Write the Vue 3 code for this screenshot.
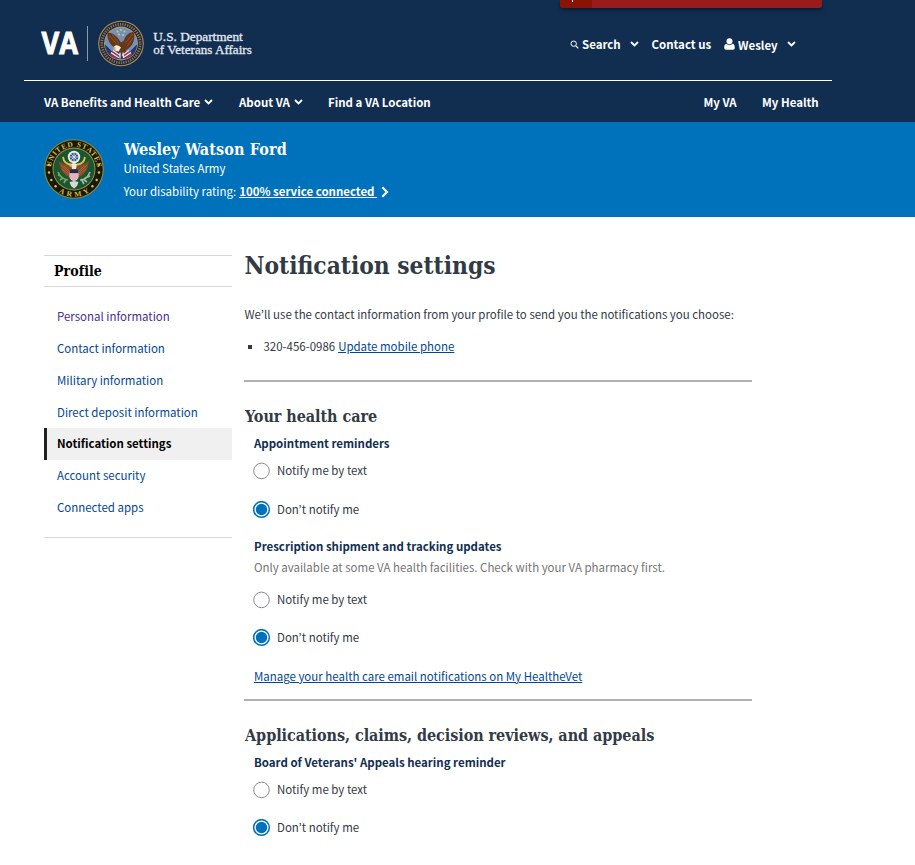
<script setup>
const sideItems = [
  { label: 'Personal information', visited: true },
  { label: 'Contact information' },
  { label: 'Military information' },
  { label: 'Direct deposit information' },
  { label: 'Notification settings', active: true },
  { label: 'Account security' },
  { label: 'Connected apps' },
]
const options = ['Notify me by text', 'Don’t notify me']
const sections = [
  {
    title: 'Your health care',
    cls: 'care',
    groups: [
      { title: 'Appointment reminders', cls: 'g1' },
      {
        title: 'Prescription shipment and tracking updates',
        cls: 'g2',
        hint: 'Only available at some VA health facilities. Check with your VA pharmacy first.',
      },
    ],
    link: 'Manage your health care email notifications on My HealtheVet',
  },
  {
    title: 'Applications, claims, decision reviews, and appeals',
    cls: 'apps',
    groups: [{ title: "Board of Veterans' Appeals hearing reminder", cls: 'g3' }],
  },
]
const ringStars = [-133, -116, -98, -80, 80, 98, 116, 133].map((d) => {
  const a = (d * Math.PI) / 180
  return { x: 30 + 25.2 * Math.sin(a), y: 30 - 25.2 * Math.cos(a) }
})
</script>

<template>
  <div class="page">
    <header class="header">
      <div class="crisis"><span class="crisis-tab"><i></i></span></div>
      <div class="top">
        <div class="brand">
          <svg class="logo" width="220" height="50" viewBox="0 0 220 50">
            <text class="va" x="1.500" y="34.200" textLength="36.500" lengthAdjust="spacingAndGlyphs">VA</text>
            <rect x="47" y="6" width="1" height="35" fill="#8a9bb0" />
            <g transform="translate(81 23.5)">
              <circle r="22.800" fill="#b3914b" />
              <circle r="21.700" fill="#1c2341" />
              <circle r="19.200" fill="none" stroke="#b39a58" stroke-width="2.800" stroke-dasharray="1.300 1.100" opacity=".7" />
              <circle r="16.900" fill="#c3a25a" />
              <circle r="16.100" fill="#6f93bd" />
              <path d="M-16 1L-8 8H8L16 1Q16 9 9 13.500Q0 18-9 13.500Q-16 9-16 1Z" fill="#26386b" />
              <path d="M-13 3L-4 13M13 3L4 13" stroke="#7d8fc0" stroke-width="1" />
              <path d="M-10 9L-2 14M-8 7L-1 12M10 9L2 14M8 7L1 12" stroke="#ece4e6" stroke-width="1.500" />
              <path d="M-11 11L-4 15M-9 8L-2 13M11 11L4 15M9 8L2 13" stroke="#c02f3e" stroke-width="1.200" />
              <path d="M-2 5C-6 5-10 2-12-2C-13.500-5-14-9-13.500-11C-9-11-4-8-1.500-3L0-1L3-3C4-8 8-11 12.500-11.500C14-9 13.500-5 12.500-2C11 2 9 4 6 6L3 10L-2 9Z" fill="#683619" />
              <path d="M-12-8L-4 1M-9-9L-2 0M11-9L4 0M12-6L6 3" stroke="#8d5327" stroke-width="1" fill="none" />
              <path d="M-7 3Q-4 0 0 4L-2.500 8L-5.500 7Z" fill="#f3eee6" />
              <path d="M-8.500 4L-5 4L-6.500 7Z" fill="#e2aa35" />
              <path d="M-1 9L-1 15M2 9L2.500 14" stroke="#f3e9d8" stroke-width="1.200" />
              <g fill="#e5c45b"><circle cy="-13.500" r="1" /><circle cx="-3.500" cy="-12" r="1" /><circle cx="3.500" cy="-12" r="1" /><circle cx="-2" cy="-9" r="1" /><circle cx="2" cy="-8.500" r="1" /></g>
            </g>
            <text class="dept" x="113.300" y="21.300" textLength="89.500" lengthAdjust="spacingAndGlyphs">U.S. Department</text>
            <text class="dept" x="113.300" y="34.300" textLength="98.500" lengthAdjust="spacingAndGlyphs">of Veterans Affairs</text>
          </svg>
        </div>
        <div class="tools">
          <svg class="mag" width="9" height="9" viewBox="0 0 9 9"><circle cx="3.700" cy="3.700" r="2.700" fill="none" stroke="#fff" stroke-width="1" /><path d="M5.800 5.800L8.300 8.300" stroke="#fff" stroke-width="1.200" /></svg>
          <span class="t-search">Search</span>
          <svg class="chev c1" width="9" height="6" viewBox="0 0 9 6"><path d="M1 1L4.500 4.500L8 1" /></svg>
          <span class="t-contact">Contact us</span>
          <svg class="user" width="11" height="12" viewBox="0 0 11 12"><circle cx="5.500" cy="3.200" r="3" fill="#fff" /><path d="M2.500 5.800C.700 6 .200 7.800.200 10Q.200 11.800 2 11.800H9Q10.800 11.800 10.800 10C10.800 7.800 10.300 6 8.500 5.800Q5.500 8.200 2.500 5.800Z" fill="#fff" /></svg>
          <span class="t-wesley">Wesley</span>
          <svg class="chev c2" width="9" height="6" viewBox="0 0 9 6"><path d="M1 1L4.500 4.500L8 1" /></svg>
        </div>
      </div>
      <nav class="nav">
        <span class="n1">VA Benefits and Health Care</span>
        <svg class="chev c3" width="9" height="6" viewBox="0 0 9 6"><path d="M1 1L4.500 4.500L8 1" /></svg>
        <span class="n2">About VA</span>
        <svg class="chev c4" width="9" height="6" viewBox="0 0 9 6"><path d="M1 1L4.500 4.500L8 1" /></svg>
        <span class="n3">Find a VA Location</span>
        <span class="n4">My VA</span>
        <span class="n5">My Health</span>
      </nav>
    </header>

    <section class="banner">
      <svg class="seal" width="60" height="60" viewBox="0 0 60 60">
        <defs>
          <path id="arcTop" d="M10.500 43.700A23 23 0 1 1 49.500 43.700" transform="translate(0 -.800)" />
          <path id="arcBottom" d="M2.200 30A27.800 27.800 0 0 0 57.800 30" />
        </defs>
        <circle cx="30" cy="30" r="29.800" fill="#8f8a34" />
        <circle cx="30" cy="30" r="28.700" fill="#17180f" />
        <circle cx="30" cy="30" r="21.500" fill="#a39a44" />
        <circle cx="30" cy="30" r="20.600" fill="#1b5632" />
        <text class="ring"><textPath href="#arcTop" startOffset="50%" text-anchor="middle" textLength="67">UNITED STATES</textPath></text>
        <text class="ring"><textPath href="#arcBottom" startOffset="50%" text-anchor="middle" textLength="33">ARMY</textPath></text>
        <circle v-for="(s, i) in ringStars" :key="i" :cx="s.x" :cy="s.y" r="1.200" fill="#e3c53c" />
        <path d="M28 25C24 27 19 25 15 22C15.500 28 18 35 25 38L30 39L35 38C42 35 44.500 28 45 22C41 25 36 27 32 25Z" fill="#8a4a28" />
        <path d="M17 26L25 34M20 27L26 33M43 26L35 34M40 27L34 33M18 30L25 36M42 30L35 36" stroke="#ad6d3e" stroke-width=".8" />
        <path d="M14 33Q17 40 24 41M17 37L14 36M19 39L16 41M22 40L20 44" stroke="#7fa45e" stroke-width="1.700" fill="none" />
        <path d="M46 33Q43 41 36 41M41 39L46 37M39 40L43 43M37 40L40 45" stroke="#a9b59f" stroke-width="1.600" fill="none" />
        <path d="M19 18Q20 25 27 25.500M41 18Q40 25 33 25.500" stroke="#dcc24c" stroke-width="1.800" fill="none" />
        <circle cx="30" cy="18" r="6.200" fill="#efeee2" />
        <circle cx="30" cy="18" r="4.300" fill="#2e5590" />
        <path d="M30 14V22M26 18H34M27.300 15.300L32.700 20.700M32.700 15.300L27.300 20.700" stroke="#dce4ee" stroke-width=".9" />
        <path d="M27 25Q30 23 33 25L32 30H28Z" fill="#f1ead5" />
        <path d="M27 25.500L24.500 27L27.500 28Z" fill="#e2ba36" />
        <path d="M25.500 31H34.500V38Q34 41 30 42Q26 41 25.500 38Z" fill="#f4e4e6" />
        <path d="M27 34V40M29 34V41.500M31 34V41.500M33 34V40" stroke="#dd7f8c" stroke-width="1" />
        <rect x="25.500" y="30.500" width="9" height="3.600" fill="#1e2b52" />
        <path d="M25.500 43L30 42L34.500 43L33 47L30 49.500L27 47Z" fill="#d4d8d6" />
      </svg>
      <div class="who">
        <div class="name">Wesley Watson Ford</div>
        <div class="branch">United States Army</div>
        <div class="rating"><span class="r1">Your disability rating:</span><a class="r2">100% service connected&nbsp;</a>
          <svg width="8" height="12" viewBox="0 0 8 12"><path d="M1.300 1.300L6 6L1.300 10.700" fill="none" stroke="#fff" stroke-width="2.200" /></svg>
        </div>
      </div>
    </section>

    <div class="body">
      <aside class="side">
        <div class="side-title">Profile</div>
        <ul class="side-list">
          <li v-for="it in sideItems" :key="it.label" :class="{ active: it.active, visited: it.visited }"><span>{{ it.label }}</span></li>
        </ul>
      </aside>

      <main class="main">
        <h1>Notification settings</h1>
        <p class="intro">We’ll use the contact information from your profile to send you the notifications you choose:</p>
        <div class="phone"><i class="bullet"></i><span>320-456-0986</span><a>Update mobile phone</a></div>
        <template v-for="s in sections" :key="s.title">
          <hr />
          <h2 :class="s.cls">{{ s.title }}</h2>
          <div v-for="g in s.groups" :key="g.title" class="group" :class="g.cls">
            <div class="g-title">{{ g.title }}</div>
            <div v-if="g.hint" class="hint">{{ g.hint }}</div>
            <div v-for="(o, i) in options" :key="o" class="radio" :class="'o' + i">
              <svg width="18" height="18" viewBox="0 0 18 18">
                <circle v-if="i === 0" cx="8.500" cy="8.900" r="7.800" fill="#fff" stroke="#8a8c90" stroke-width="1" />
                <template v-else>
                  <circle cx="8.500" cy="8.500" r="7.850" fill="#fff" stroke="#0071bb" stroke-width="1.500" />
                  <circle cx="8.500" cy="8.500" r="5.700" fill="#0071bb" />
                </template>
              </svg>
              <span>{{ o }}</span>
            </div>
          </div>
          <a v-if="s.link" class="manage">{{ s.link }}</a>
        </template>
      </main>
    </div>
  </div>
</template>

<style>
body { background: #fff; overflow: hidden; }
</style>

<style scoped>
.page { width: 915px; height: 865px; overflow: hidden; background: #fff; font-family: "Noto Sans CJK KR", "Noto Sans", sans-serif; font-size: 11.47px; line-height: 20px; color: #323a45; white-space: nowrap; }
.header { position: relative; height: 122px; background: #112e51; color: #fff; font-weight: 700; }
.crisis { position: absolute; left: 560px; top: 0; width: 262px; height: 8px; background: #981b1e; border-radius: 0 0 3px 3px; box-shadow: 0 2px 4px rgba(0, 0, 0, .45); overflow: hidden; }
.crisis-tab { display: flex; width: 32px; height: 8px; background: #8b1303; padding-left: 12px; box-sizing: border-box; }
.crisis-tab i { width: 1px; height: 2px; background: #fff; }
.top { box-sizing: border-box; width: 808px; height: 81px; margin-left: 24px; border-bottom: 1px solid #fff; padding: 20px 0 0 16px; display: flex; }
.brand { width: 530px; }
.logo { display: block; }
.va { font: 700 31px "Open Sans", sans-serif; fill: #fff; stroke: #fff; stroke-width: .9px; }
.dept { font: 400 13px "Liberation Serif", serif; fill: #e4e9ef; stroke: #e4e9ef; stroke-width: .3px; }
.tools { display: flex; align-items: center; height: 48px; }
.chev { flex: none; fill: none; stroke: #fff; stroke-width: 1.8px; }
.mag { margin-right: 3px; flex: none; }
.t-search { width: 39px; }
.c1 { margin: 0 12.5px 0 9px; }
.t-contact { width: 60px; }
.user { margin: 0 2px 0 12.5px; flex: none; }
.t-wesley { width: 40px; padding: 2px 0 0 1px; }
.c2 { margin-left: 9px; }
.nav { display: flex; align-items: center; height: 41px; padding-left: 44px; }
.n1 { width: 157px; }
.c3 { margin: 0 26px 0 3px; }
.n2 { width: 52px; }
.c4 { margin: 0 25px 0 3px; }
.n3 { width: 375.5px; }
.n4 { width: 58.5px; }
.banner { display: flex; height: 95px; background: #0071bb; color: #fff; box-sizing: border-box; padding: 17px 0 0 44px; }
.seal { flex: none; }
.ring { font: 700 7.500px "Liberation Serif", serif; fill: #d9bd3c; }
.who { margin-left: 19px; }
.name { font: 700 16px/22px "DejaVu Serif", serif; font-stretch: condensed; padding-left: 1px; letter-spacing: .12px; }
.branch { line-height: 18px; margin-top: -2px; padding-left: .5px; }
.rating { display: flex; align-items: center; height: 20px; margin-top: 4px; padding-left: .5px; }
.r1 { margin-right: 3px; }
.r2 { font-weight: 700; text-decoration: underline; }
.rating svg { margin: 1px 0 0 4px; }
.body { display: flex; padding-left: 44px; }
.side { width: 188px; height: 283px; margin-top: 38px; box-sizing: border-box; border-top: 1px solid #d6d7d9; border-bottom: 1px solid #d6d7d9; }
.side-title { height: 30px; border-bottom: 1px solid #d6d7d9; padding-left: 10px; color: #000; font: 700 14px/30px "DejaVu Serif", serif; font-stretch: condensed; letter-spacing: .05px; }
.side-list { list-style: none; margin: 14px 0 0; padding: 0; }
.side-list li { height: 31.850px; line-height: 31.850px; padding-left: 13px; color: #004795; }
.side-list .visited { color: #4c2c92; }
.side-list .active { background: #f0f0f0; border-left: 3px solid #212121; padding-left: 10px; color: #000; font-weight: 700; }
.main { width: 508px; margin-left: 12px; padding-top: 29px; }
h1, h2 { margin: 0; padding-left: 1px; font-family: "DejaVu Serif", serif; font-stretch: condensed; font-weight: 700; color: #323a45; }
h1 { font-size: 24.3px; line-height: 40px; padding-left: 0.5px; }
.intro { margin: 18px 0 13px; padding-left: .5px; }
.phone { display: flex; align-items: center; height: 20px; margin-bottom: 23px; }
.phone span, .phone a { padding-bottom: 2px; }
.bullet { width: 4px; height: 4px; background: #323a45; margin: 0 11.5px 0 4px; }
.phone a { margin-left: 3px; }
a { color: #004795; text-decoration: underline; }
.rating a { color: #fff; }
hr { height: 2px; border: 0; margin: 0; background: #aeb0b5; }
h2 { font-size: 16px; line-height: 24px; margin: 23px 0 4px; letter-spacing: -.05px; }
.group { padding-left: 9px; }
.g-title { font-weight: 700; color: #112e51; padding-left: 1px; margin-bottom: 8px; }
.hint { color: #757575; padding-left: 1px; margin: -7px 0 13px; }
.g2 { margin-top: 16px; }
.radio { display: flex; align-items: center; height: 20px; }
.radio span { margin-left: 6px; padding-bottom: 2px; }
.o1 { margin-top: 18px; }
.g1 .o1 { margin-top: 19px; }
.manage { display: block; width: max-content; margin: 18px 0 13px 10px; }
</style>
